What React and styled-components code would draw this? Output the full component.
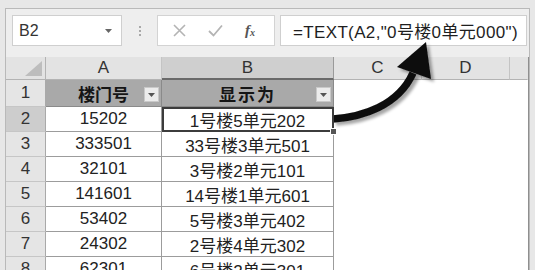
import styled, { createGlobalStyle } from "styled-components";

const FONT = `"Liberation Sans", "Noto Sans CJK SC", sans-serif`;

const GlobalStyle = createGlobalStyle`
    html, body {
        margin: 0;
        padding: 0;
        background: #e7e7e7;
        font-family: ${FONT};
    }
`;

const COLUMNS = ["A", "B", "C", "D", ""];

const ROWS = [
    ["15202", "1号楼5单元202"],
    ["333501", "33号楼3单元501"],
    ["32101", "3号楼2单元101"],
    ["141601", "14号楼1单元601"],
    ["53402", "5号楼3单元402"],
    ["24302", "2号楼4单元302"],
    ["62301", "6号楼2单元301"],
];

const FilterButton = () => (
    <FilterBox>
        <svg width="7" height="4" viewBox="0 0 7 4">
            <path d="M0 0 L7 0 L3.5 4 Z" fill="#555" />
        </svg>
    </FilterBox>
);

const Arrow = () => (
    <ArrowLayer width="535" height="270" viewBox="0 0 535 270">
        <defs>
            <filter id="shadow" x="-20%" y="-20%" width="140%" height="140%">
                <feDropShadow dx="3" dy="3" stdDeviation="1.6" floodColor="#000" floodOpacity="0.35" />
            </filter>
        </defs>
        <g filter="url(#shadow)">
            <path d="M333 119 C362 117, 398 106, 413 73" stroke="#0d0d0d" strokeWidth="7.5" fill="none" />
            <polygon points="397,67 426,42 431,79" fill="#0d0d0d" />
        </g>
    </ArrowLayer>
);

const App = () => {
    return (
        <Page>
            <GlobalStyle />
            <Frame>
                <Toolbar>
                    <NameBox>
                        B2
                        <svg width="7" height="4" viewBox="0 0 7 4">
                            <path d="M0 0 L7 0 L3.5 4 Z" fill="#666" />
                        </svg>
                    </NameBox>
                    <Grip>
                        <i />
                        <i />
                        <i />
                    </Grip>
                    <ButtonBox>
                        <svg width="13" height="13" viewBox="0 0 13 13">
                            <path d="M1 1 L12 12 M12 1 L1 12" stroke="#b4b4b4" strokeWidth="1.6" />
                        </svg>
                        <svg width="15" height="13" viewBox="0 0 15 13">
                            <path d="M1 7 L5.5 11.5 L14 1.5" stroke="#b4b4b4" strokeWidth="1.8" fill="none" />
                        </svg>
                        <Fx>
                            f<sub>x</sub>
                        </Fx>
                    </ButtonBox>
                    <FormulaBox>=TEXT(A2,"0号楼0单元000")</FormulaBox>
                </Toolbar>

                <Sheet>
                    <Corner>
                        <svg width="17" height="15" viewBox="0 0 17 15">
                            <path d="M17 0 L17 15 L0 15 Z" fill="#bdbdbd" />
                        </svg>
                    </Corner>
                    {COLUMNS.map((col, idx) => (
                        <ColHeader key={idx} $selected={col === "B"} $last={idx === COLUMNS.length - 1}>
                            {col}
                        </ColHeader>
                    ))}

                    <RowHeader>1</RowHeader>
                    <TitleCell>
                        楼门号
                        <FilterButton />
                    </TitleCell>
                    <TitleCell $wide>
                        显示为
                        <FilterButton />
                    </TitleCell>
                    <EmptyCell />
                    <EmptyCell />
                    <EmptyCell />

                    {ROWS.map((row, idx) => (
                        <Row key={idx}>
                            <RowHeader $selected={idx === 0}>{idx + 2}</RowHeader>
                            <DataCell>{row[0]}</DataCell>
                            <DataCell $active={idx === 0}>
                                {row[1]}
                                {idx === 0 && <FillHandle />}
                            </DataCell>
                            <EmptyCell />
                            <EmptyCell />
                            <EmptyCell />
                        </Row>
                    ))}
                </Sheet>
            </Frame>
            <Arrow />
        </Page>
    );
};

export default App;

const Page = styled.div`
    position: relative;
    width: 535px;
    height: 270px;
    overflow: hidden;
    padding: 8px 5px 0 5px;
    box-sizing: border-box;
    background: #e7e7e7;
`;

const Frame = styled.div`
    width: 525px;
    height: 100%;
    border: 1px solid #b9b9b9;
    border-bottom: none;
    background: #eeeeee;
    box-sizing: border-box;
`;

const Toolbar = styled.div`
    display: flex;
    align-items: center;
    height: 48px;
    padding: 0 2px 5px 6px;
    box-sizing: border-box;
`;

const NameBox = styled.div`
    display: flex;
    align-items: center;
    justify-content: space-between;
    width: 110px;
    height: 31px;
    padding: 0 9px 0 6px;
    box-sizing: border-box;
    background: #fff;
    border: 1px solid #cfcfcf;
    font-size: 16px;
    color: #333;
`;

const Grip = styled.div`
    display: flex;
    flex-direction: column;
    align-items: center;
    gap: 2px;
    width: 35px;

    i {
        display: block;
        width: 2px;
        height: 2px;
        background: #a8a8a8;
    }
`;

const ButtonBox = styled.div`
    display: flex;
    align-items: center;
    justify-content: space-around;
    width: 118px;
    height: 31px;
    padding: 0 8px 0 4px;
    box-sizing: border-box;
    background: #fff;
    border: 1px solid #d3d3d3;
`;

const Fx = styled.span`
    font-family: "Liberation Serif", serif;
    font-style: italic;
    font-weight: 700;
    font-size: 15px;
    color: #555;

    sub {
        font-size: 10px;
        vertical-align: -1px;
    }
`;

const FormulaBox = styled.div`
    display: flex;
    align-items: center;
    flex: 1;
    height: 31px;
    margin-left: 5px;
    padding-left: 12px;
    box-sizing: border-box;
    background: #fff;
    border: 1px solid #cfcfcf;
    font-size: 17px;
    letter-spacing: 0.35px;
    color: #1e1e1e;
    white-space: nowrap;
`;

const Sheet = styled.div`
    display: grid;
    grid-template-columns: 40px 116px 172px 88px 88px 18px;
    grid-template-rows: 23px 27px repeat(7, 25px);
    width: 522px;
    background: #fff;
    border-right: 1px solid #8f8f8f;
    font-size: 17px;
    color: #222;
`;

const Row = styled.div`
    display: contents;
`;

const Cell = styled.div`
    position: relative;
    display: flex;
    align-items: center;
    justify-content: center;
    box-sizing: border-box;
    white-space: nowrap;
`;

const Corner = styled(Cell)`
    justify-content: flex-end;
    align-items: flex-end;
    padding: 0 3px 3px 0;
    background: #e3e3e3;
    border-right: 1px solid #b3b3b3;
    border-bottom: 1px solid #b3b3b3;
`;

const ColHeader = styled(Cell)`
    background: ${({ $selected }) => ($selected ? "#cfcfcf" : "#e3e3e3")};
    border-right: 1px solid ${({ $selected, $last }) => ($selected ? "#9a9a9a" : $last ? "transparent" : "#c4c4c4")};
    border-bottom: ${({ $selected }) => ($selected ? "2px solid #6a6a6a" : "1px solid #b3b3b3")};
    color: #333;
`;

const RowHeader = styled(Cell)`
    background: ${({ $selected }) => ($selected ? "#cdcdcd" : "#e5e5e5")};
    border-right: 1px solid #a9a9a9;
    border-bottom: 1px solid #c6c6c6;
    color: #333;
`;

const TitleCell = styled(Cell)`
    background: #a9a9a9;
    border-right: 1px solid #8a8a8a;
    border-bottom: 1px solid #8a8a8a;
    font-weight: 700;
    color: #151515;
    letter-spacing: ${({ $wide }) => ($wide ? "2px" : "0")};
`;

const FilterBox = styled.span`
    position: absolute;
    right: 2px;
    top: 7px;
    display: flex;
    align-items: center;
    justify-content: center;
    width: 15px;
    height: 15px;
    background: #ececec;
    border: 1px solid #c9c9c9;
    box-sizing: border-box;
`;

const DataCell = styled(Cell)`
    background: #fff;
    border-right: 1px solid #9c9c9c;
    border-bottom: 1px solid #9c9c9c;
    outline: ${({ $active }) => ($active ? "2px solid #3c3c3c" : "none")};
    outline-offset: -2px;
    z-index: ${({ $active }) => ($active ? 1 : 0)};
`;

const FillHandle = styled.span`
    position: absolute;
    right: -4px;
    bottom: -4px;
    width: 5px;
    height: 5px;
    background: #555;
    border: 1px solid #fff;
`;

const EmptyCell = styled(Cell)`
    background: #fff;
`;

const ArrowLayer = styled.svg`
    position: absolute;
    left: 0;
    top: 0;
    pointer-events: none;
`;
